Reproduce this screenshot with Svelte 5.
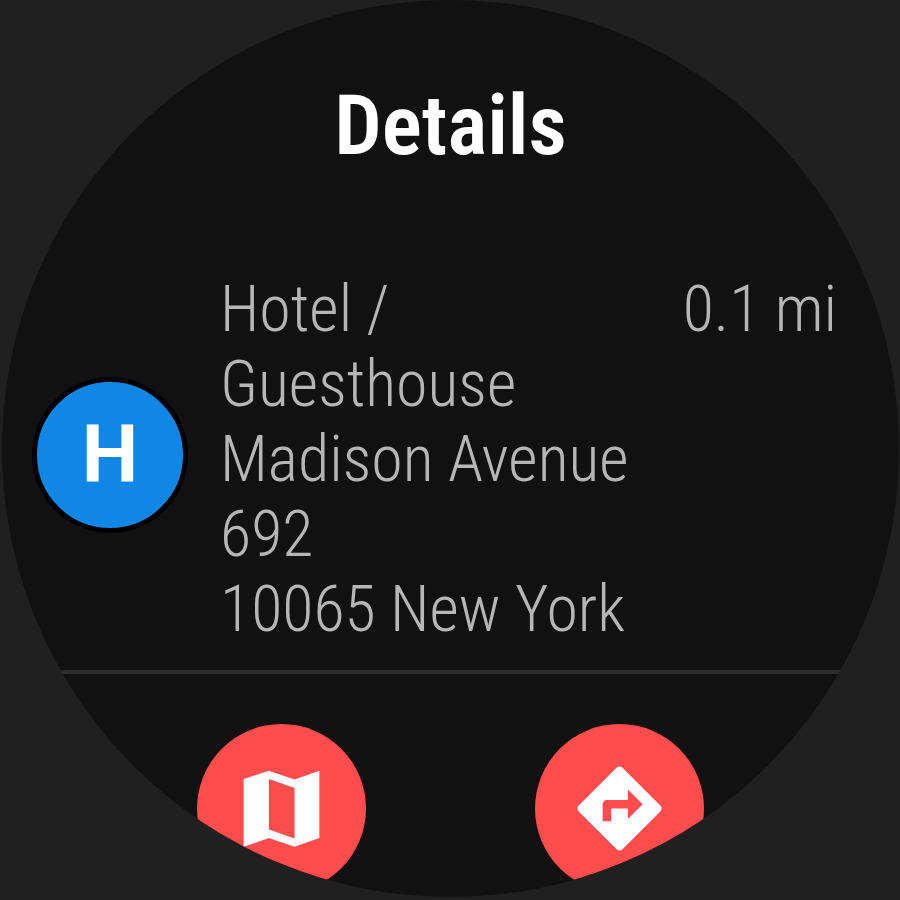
<script>
  const place = {
    badge: 'H',
    lines: ['Hotel / Guesthouse', 'Madison Avenue 692', '10065 New York'],
    distance: '0.1 mi'
  };
</script>

<main class="watch">
  <div class="face">
    <h1>Details</h1>

    <section class="place">
      <span class="badge">{place.badge}</span>
      <address>
        {#each place.lines as line}
          <p>{line}</p>
        {/each}
      </address>
      <span class="distance">{place.distance}</span>
    </section>

    <nav class="actions">
      <button type="button" aria-label="Show on map">
        <svg viewBox="0 0 24 24" aria-hidden="true">
          <path fill-rule="evenodd" d="M3 5L9 3l6.1 2.1L21 3v16l-5.9 2.1-6.1-2.1-6 2.1zM9 5v12l6.1 2.1V7.1z" />
        </svg>
      </button>
      <button type="button" aria-label="Navigate">
        <svg viewBox="0 0 24 24" aria-hidden="true">
          <path d="M21.71 11.29l-9-9a.996.996 0 0 0-1.41 0l-9 9a.996.996 0 0 0 0 1.41l9 9c.39.39 1.02.39 1.41 0l9-9a.996.996 0 0 0 0-1.41zM14 14.5V12h-4v3H8v-4c0-.55.45-1 1-1h5V7.5l3.5 3.5-3.5 3.5z" />
        </svg>
      </button>
    </nav>
  </div>
</main>

<style>
  :global(body) {
    background: #202020;
  }

  .watch {
    padding: 0 1px 3px 2px;
    font-family: 'Roboto Condensed', Roboto, sans-serif;
  }

  .face {
    box-sizing: border-box;
    width: 100%;
    aspect-ratio: 1;
    padding-top: 75px;
    border-radius: 50%;
    overflow: hidden;
    background: #111;
  }

  h1 {
    margin: 0;
    color: #fff;
    font-size: 84px;
    font-weight: 600;
    line-height: 102px;
    text-align: center;
  }

  .place {
    display: flex;
    align-items: center;
    margin-top: 84px;
    padding: 11px 62px 23px 30px;
    border-bottom: 4px solid #2d2d2d;
    color: #b6b6b6;
    font-size: 64px;
    font-weight: 300;
    line-height: 75px;
  }

  .badge {
    box-sizing: border-box;
    flex: none;
    width: 156px;
    height: 156px;
    margin: 0 32px 10px 0;
    border: 5px solid #000;
    border-radius: 50%;
    background: #1087e4;
    color: #fff;
    font-family: Roboto, sans-serif;
    font-size: 80px;
    font-weight: 700;
    line-height: 146px;
    text-align: center;
  }

  address {
    flex: 1;
    min-width: 0;
    font-style: normal;
  }

  p {
    margin: 0;
  }

  .distance {
    flex: none;
    align-self: flex-start;
    white-space: nowrap;
  }

  .actions {
    display: flex;
    justify-content: space-around;
    padding: 50px 110px 0;
  }

  button {
    width: 169px;
    height: 169px;
    padding: 0;
    border: 0;
    border-radius: 50%;
    background: #ff4c4c;
    color: #fff;
    cursor: pointer;
  }

  svg {
    display: block;
    width: 101px;
    height: 101px;
    margin: auto;
    fill: currentColor;
  }
</style>
